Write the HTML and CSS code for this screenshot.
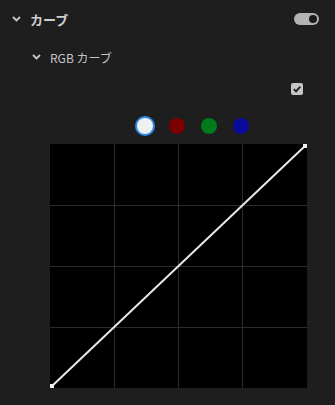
FILE: index.html
```html
<!DOCTYPE html>
<html lang="ja">
<head>
  <meta charset="UTF-8">
  <title>カーブ</title>
  <link rel="stylesheet" href="styles.css">
</head>
<body>

<div class="panel">
  <div class="header">
    <svg class="chevron" width="9" height="6" viewBox="0 0 9 6">
      <path d="M1 1 L4.5 4.5 L8 1" fill="none" stroke="#c8c8c8" stroke-width="1.8"/>
    </svg>
    <span class="title">カーブ</span>
    <div class="toggle"><div class="knob"></div></div>
  </div>

  <div class="sub">
    <svg class="chevron" width="9" height="6" viewBox="0 0 9 6">
      <path d="M1 1 L4.5 4.5 L8 1" fill="none" stroke="#c8c8c8" stroke-width="1.8"/>
    </svg>
    <span class="sub-title">RGB カーブ</span>
  </div>

  <div class="check-row">
    <div class="checkbox">
      <svg width="12" height="12" viewBox="0 0 12 12">
        <path d="M2.8 6.2 L5 8.4 L9.3 3.6" fill="none" stroke="#1e1e1e" stroke-width="1.8"/>
      </svg>
    </div>
  </div>

  <div class="dots">
    <div class="dot white"></div>
    <div class="dot red"></div>
    <div class="dot green"></div>
    <div class="dot blue"></div>
  </div>

  <div class="graph">
    <svg width="257" height="244" viewBox="0 0 257 244">
      <rect x="0" y="0" width="257" height="244" fill="#000"/>
      <g stroke="#2b2b2b" stroke-width="1">
        <line x1="64.5" y1="0" x2="64.5" y2="244"/>
        <line x1="128.5" y1="0" x2="128.5" y2="244"/>
        <line x1="192.5" y1="0" x2="192.5" y2="244"/>
        <line x1="0" y1="61.5" x2="257" y2="61.5"/>
        <line x1="0" y1="122.5" x2="257" y2="122.5"/>
        <line x1="0" y1="183.5" x2="257" y2="183.5"/>
      </g>
      <line x1="1.5" y1="242.5" x2="255.5" y2="1.5" stroke="#e8e8e8" stroke-width="2"/>
      <rect x="0" y="240" width="4" height="4" fill="#f0f0f0"/>
      <rect x="253" y="0" width="4" height="4" fill="#f0f0f0"/>
    </svg>
  </div>
</div>

</body>
</html>
```

FILE: styles.css
```css
body {
  margin: 0;
  padding: 0;
  background-color: #1e1e1e;
  font-family: "Noto Sans CJK JP", "Noto Sans", sans-serif;
  color: #cfcfcf;
}

.panel {
  width: 335px;
  height: 405px;
}

.header {
  display: flex;
  align-items: center;
  height: 38px;
  padding: 0 16px 0 12px;
}

.chevron {
  margin-right: 9px;
}

.title {
  font-size: 13px;
  font-weight: bold;
  color: #cfcfcf;
}

.toggle {
  margin-left: auto;
  width: 23px;
  height: 12px;
  border-radius: 6px;
  background-color: #b3b3b3;
  display: flex;
  align-items: center;
  justify-content: flex-end;
  padding-right: 2px;
}

.knob {
  width: 8px;
  height: 8px;
  border-radius: 50%;
  background-color: #1a1a1a;
}

.sub {
  display: flex;
  align-items: center;
  height: 38px;
  padding-left: 32px;
}

.sub .chevron {
  margin-right: 9px;
}

.sub-title {
  font-size: 12px;
  color: #c4c4c4;
}

.check-row {
  display: flex;
  justify-content: flex-end;
  padding: 7px 32px 0 0;
}

.checkbox {
  width: 12px;
  height: 12px;
  border-radius: 2px;
  background-color: #c6c6c6;
  display: flex;
}

.dots {
  display: flex;
  align-items: center;
  gap: 12px;
  padding-left: 135px;
  margin-top: 21px;
  height: 20px;
}

.dot {
  width: 16px;
  height: 16px;
  border-radius: 50%;
  margin: 2px;
}

.dot.white {
  background-color: #f0f0f0;
  box-shadow: 0 0 0 2px #2d8ceb;
}

.dot.red { background-color: #7c0000; }
.dot.green { background-color: #007a1a; }
.dot.blue { background-color: #0a0a9c; }

.graph {
  margin: 8px 0 0 50px;
  width: 257px;
  height: 244px;
}

.graph svg {
  display: block;
}
```
